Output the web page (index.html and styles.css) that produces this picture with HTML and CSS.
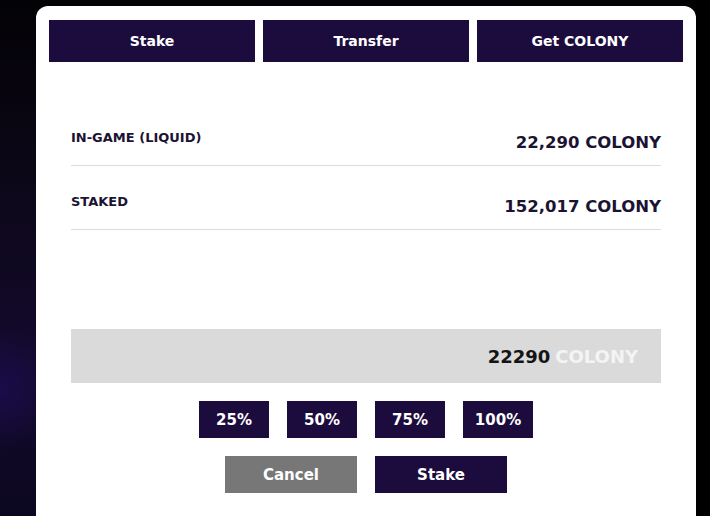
FILE: index.html
```html
<!DOCTYPE html>
<html lang="en">
<head>
    <meta charset="UTF-8">
    <meta name="viewport" content="width=device-width, initial-scale=1.0">
    <title>Stake COLONY</title>
    <link rel="stylesheet" href="styles.css">
</head>
<body>
    <div class="backdrop">
        <div class="modal">
            <div class="tabs">
                <button class="tab">Stake</button>
                <button class="tab">Transfer</button>
                <button class="tab">Get COLONY</button>
            </div>

            <div class="balances">
                <div class="row">
                    <span class="label">IN-GAME (LIQUID)</span>
                    <span class="value">22,290 COLONY</span>
                </div>
                <div class="row">
                    <span class="label">STAKED</span>
                    <span class="value">152,017 COLONY</span>
                </div>
            </div>

            <div class="amount">
                <span class="amount-num">22290</span>
                <span class="amount-unit">COLONY</span>
            </div>

            <div class="percents">
                <button class="btn small">25%</button>
                <button class="btn small">50%</button>
                <button class="btn small">75%</button>
                <button class="btn small">100%</button>
            </div>

            <div class="actions">
                <button class="btn wide cancel">Cancel</button>
                <button class="btn wide">Stake</button>
            </div>
        </div>
    </div>
</body>
</html>
```

FILE: styles.css
```css
/* Modal de staking */
body {
    margin: 0;
    padding: 0;
    font-family: "DejaVu Sans", sans-serif;
    background: #000000;
    width: 710px;
    height: 516px;
    overflow: hidden;
}
.backdrop {
    height: 516px;
    width: 696px;
    background:
        radial-gradient(circle at 0 390px, #1a0c4a 0, rgba(20, 10, 50, 0) 60px),
        linear-gradient(180deg, #030205 0, #0c0718 35%, #140a2e 70%, #0c0720 100%);
    padding-top: 6px;
    padding-left: 36px;
    box-sizing: border-box;
}
.modal {
    background: #ffffff;
    width: 660px;
    height: 520px;
    border-radius: 12px 12px 0 0;
    padding: 14px 13px 0;
    box-sizing: border-box;
}
.tabs {
    display: flex;
    gap: 8px;
}
.tab {
    flex: 1;
    height: 42px;
    border: none;
    background: #1c0c3e;
    color: #ffffff;
    font-family: inherit;
    font-weight: bold;
    font-size: 14px;
}
.balances {
    margin: 53px 22px 0;
}
.row {
    display: flex;
    justify-content: space-between;
    align-items: flex-end;
    height: 51px;
    padding-bottom: 13px;
    box-sizing: border-box;
    border-bottom: 1px solid #dcdcdc;
    color: #1c1333;
}
.row + .row {
    height: 64px;
}
.label {
    font-size: 13px;
    font-weight: bold;
    padding-bottom: 7px;
}
.value {
    font-size: 16.5px;
    font-weight: bold;
}
.amount {
    margin: 99px 22px 0;
    height: 54px;
    background: #dadada;
    display: flex;
    justify-content: flex-end;
    align-items: center;
    gap: 5px;
    padding-right: 23px;
    font-size: 18px;
    font-weight: bold;
}
.amount-num {
    color: #141414;
}
.amount-unit {
    color: #f4f4f4;
}
.percents, .actions {
    display: flex;
    justify-content: center;
    gap: 18px;
}
.percents {
    margin-top: 18px;
}
.actions {
    margin-top: 18px;
}
.btn {
    height: 37px;
    border: none;
    background: #1c0c3e;
    color: #ffffff;
    font-family: inherit;
    font-weight: bold;
    font-size: 15px;
}
.small {
    width: 70px;
}
.wide {
    width: 132px;
}
.cancel {
    background: #777777;
}
```
